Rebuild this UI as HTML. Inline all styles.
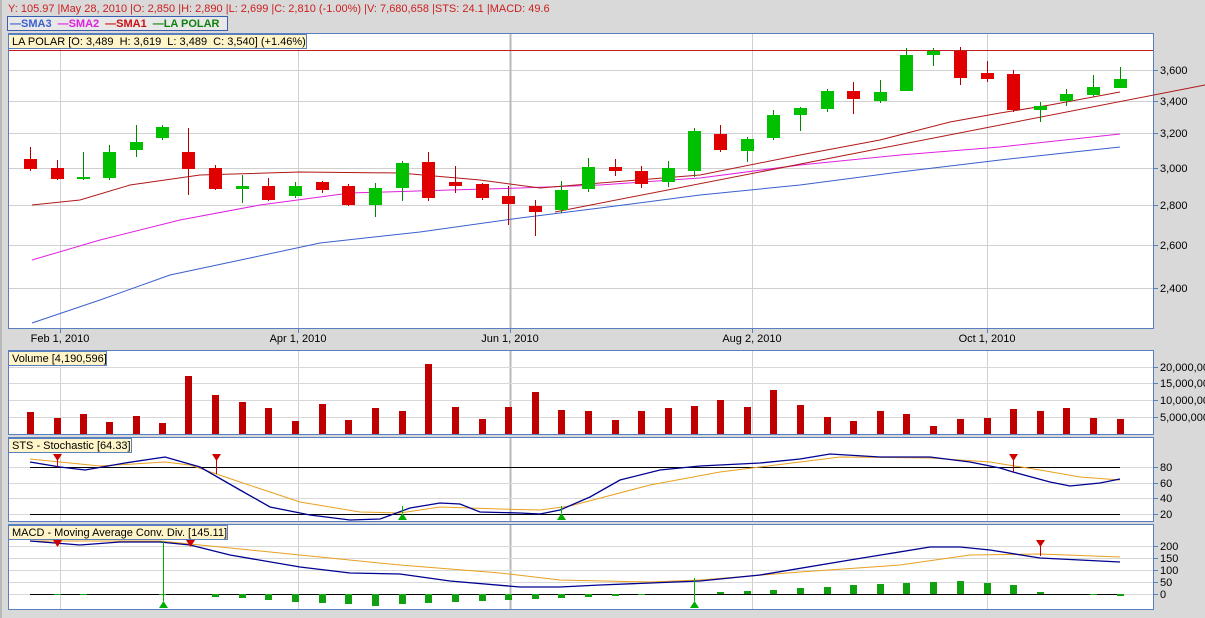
<!DOCTYPE html>
<html><head><meta charset="utf-8"><style>
body{margin:0;background:#d9d9d9;width:1205px;height:618px;overflow:hidden;font-family:"Liberation Sans",Arial,sans-serif}
svg{display:block}
text{font-family:"Liberation Sans",Arial,sans-serif;font-size:11px}
</style></head><body>
<svg id="s" width="1205" height="618" xmlns="http://www.w3.org/2000/svg">
<rect x="0" y="0" width="1205" height="618" fill="#d9d9d9"/>
<line x1="1" y1="0" x2="1" y2="618" stroke="#999"/>
<text x="8" y="12" fill="#cc2020">Y: 105.97 |May 28, 2010 |O: 2,850 |H: 2,890 |L: 2,699 |C: 2,810 (-1.00%) |V: 7,680,658 |STS: 24.1 |MACD: 49.6</text>
<rect x="7.5" y="16.5" width="220" height="14" fill="#e8e8e8" stroke="#3a5fb0"/>
<text x="10" y="27" font-weight="bold"><tspan fill="#3a5fd0">—SMA3</tspan><tspan fill="#e020e0" dx="6">—SMA2</tspan><tspan fill="#cc1010" dx="6">—SMA1</tspan><tspan fill="#108010" dx="6">—LA POLAR</tspan></text>
<rect x="8.5" y="33.5" width="1145" height="295" fill="#fff" stroke="#5a7fc0"/>
<rect x="8.5" y="350.5" width="1145" height="84" fill="#fff" stroke="#5a7fc0"/>
<rect x="8.5" y="437.5" width="1145" height="84" fill="#fff" stroke="#5a7fc0"/>
<rect x="8.5" y="524.5" width="1145" height="85" fill="#fff" stroke="#5a7fc0"/>
<g id="g"></g>
</svg>
<script>
var g=document.getElementById('g'),h='';
function L(x1,y1,x2,y2,c,w){h+='<line x1="'+x1+'" y1="'+y1+'" x2="'+x2+'" y2="'+y2+'" stroke="'+c+'" stroke-width="'+(w||1)+'"/>';}
function P(pts,c,w){h+='<polyline fill="none" stroke="'+c+'" stroke-width="'+(w||1)+'" points="'+pts+'"/>';}
function T(x,y,t,a,c){h+='<text x="'+x+'" y="'+y+'" fill="'+(c||'#000')+'"'+(a?' text-anchor="'+a+'"':'')+'>'+t+'</text>';}
[[70,'3,600'],[101,'3,400'],[133,'3,200'],[168,'3,000'],[205,'2,800'],[245,'2,600'],[288,'2,400']].forEach(function(r){L(9,r[0]+.5,1153,r[0]+.5,'#d0d0d0');L(1154,r[0]+.5,1158,r[0]+.5,'#5a7fc0');T(1160,r[0]+4,r[1]);});
[[60,'Feb 1, 2010'],[298,'Apr 1, 2010'],[521,'Jun 1, 2010'],[752,'Aug 2, 2010'],[987,'Oct 1, 2010']].forEach(function(r){
 var x=r[0];if(x==521)x=510;
 [[34,328],[351,434],[438,521],[525,609]].forEach(function(p){L(x+.5,p[0],x+.5,p[1],x==510?'#b8b8b8':'#d0d0d0',x==510?2:1);});
 L(x+.5,328,x+.5,333,'#5a7fc0');T(x,342,r[1],'middle');});
L(9,50.5,1153,50.5,'#c02020');
var C=[[30,'r',159,169,147,171],[57,'r',168,179,160,180],[83,'g',177,179,152,180],[109,'g',152,178,145,180],[136,'g',142,150,125,157],[162,'g',127,138,125,140],[188,'r',152,169,128,195],[215,'r',168,189,165,190],[242,'g',186,189,175,203],[268,'r',186,200,178,201],[295,'g',186,196,182,198],[322,'r',182,190,181,193],[348,'r',186,205,184,206],[375,'g',188,205,183,217],[402,'g',163,188,161,201],[428,'r',162,198,152,201],[455,'r',182,186,166,193],[482,'r',184,198,183,200],[508,'r',196,204,186,225],[535,'r',206,212,200,236],[561,'g',190,210,181,213],[588,'g',167,189,158,192],[615,'r',167,171,159,176],[641,'r',171,184,166,188],[668,'g',168,182,161,187],[694,'g',131,171,128,177],[720,'r',134,150,125,152],[747,'g',139,151,137,162],[773,'g',115,138,110,140],[800,'g',108,115,107,131],[827,'g',91,109,89,112],[853,'r',91,99,82,114],[880,'g',92,101,80,103],[906,'g',55,91,48,91],[933,'g',51,55,48,66],[960,'r',51,78,47,85],[987,'r',73,79,61,82],[1013,'r',74,110,70,112],[1040,'g',106,110,102,122],[1066,'g',94,101,89,106],[1093,'g',87,95,75,97],[1120,'g',79,88,67,88]];
P('32,323 100,300 170,275 250,258 320,243 420,232 520,218 600,208 700,195 800,185 900,172 1000,160 1120,147','#3a5fd0');
P('32,260 100,240 180,220 260,205 350,193 450,190 520,188 600,185 700,178 800,165 900,155 1000,147 1120,134','#e020e0');
P('32,205 80,200 130,185 200,175 300,172 400,173 480,180 540,188 600,183 700,175 800,155 880,140 950,122 1000,113 1050,105 1120,92','#b01818');
L(555,212,1205,85,'#b01818');
C.forEach(function(c){var col=c[1]=='r'?'#e00000':'#00c000',wc=c[1]=='r'?'#b00000':'#008800';
 L(c[0]+.5,c[4],c[0]+.5,c[5],wc);h+='<rect x="'+(c[0]-6)+'" y="'+c[2]+'" width="13" height="'+Math.max(2,c[3]-c[2])+'" fill="'+col+'"/>';});
h+='<rect x="8.5" y="34.5" width="298" height="14" fill="#fff5c8" stroke="#5a7fc0"/>';
T(12,45,'LA POLAR [O: 3,489&#160; H: 3,619&#160; L: 3,489&#160; C: 3,540] (+1.46%)');
[[367,'20,000,00'],[383,'15,000,00'],[400,'10,000,00'],[417,'5,000,000']].forEach(function(r){L(9,r[0]+.5,1153,r[0]+.5,'#d8d8d8');L(1154,r[0]+.5,1158,r[0]+.5,'#5a7fc0');T(1160,r[0]+4,r[1]);});
var V=[412,418,414,422,416,423,376,395,402,408,421,404,420,408,411,364,407,419,407,392,410,411,420,411,408,406,400,407,390,405,417,421,411,414,426,419,418,409,411,408,418,419];
C.forEach(function(c,i){h+='<rect x="'+(c[0]-3)+'" y="'+V[i]+'" width="7" height="'+(434-V[i])+'" fill="#c00000"/>';});
h+='<rect x="8.5" y="351.5" width="98" height="14" fill="#fff5c8" stroke="#5a7fc0"/>';T(12,362,'Volume [4,190,596]');
[[467,'80'],[483,'60'],[498,'40'],[514,'20']].forEach(function(r){L(9,r[0]+.5,1153,r[0]+.5,'#d8d8d8');L(1154,r[0]+.5,1158,r[0]+.5,'#5a7fc0');T(1160,r[0]+4,r[1]);});
L(30,467.5,1120,467.5,'#000');L(30,514.5,1120,514.5,'#000');
P('30,459 100,466 165,462 190,465 240,482 300,502 360,512 400,513 440,507 500,509 540,510 570,506 650,485 720,472 800,462 840,457 930,458 990,462 1040,470 1080,477 1120,480','#e8a020');
P('30,462 60,467 85,470 125,463 165,457 200,467 240,490 270,507 310,515 350,520 380,519 410,508 440,503 460,504 480,512 520,513 540,514 560,510 590,497 620,480 660,470 700,466 760,463 800,459 830,454 880,457 930,457 970,462 1000,468 1013,472 1050,482 1070,486 1100,483 1120,479','#000090',1.3);
function down(x,y1,y2){L(x+.5,y1,x+.5,y2,'#c00000');h+='<polygon points="'+(x-4)+','+y1+' '+(x+5)+','+y1+' '+(x+.5)+','+(y1+7)+'" fill="#d00000"/>';}
function up(x,y1,y2){L(x+.5,y1,x+.5,y2,'#00b000');h+='<polygon points="'+(x-4)+','+(y2+7)+' '+(x+5)+','+(y2+7)+' '+(x+.5)+','+y2+'" fill="#00b000"/>';}
down(57,454,467);down(216,454,474);down(1013,454,472);
up(402,506,513);up(561,506,513);
h+='<rect x="8.5" y="438.5" width="123" height="14" fill="#fff5c8" stroke="#5a7fc0"/>';T(12,449,'STS - Stochastic [64.33]');
[[546,'200'],[558,'150'],[570,'100'],[582,'50'],[594,'0']].forEach(function(r){L(9,r[0]+.5,1153,r[0]+.5,'#d8d8d8');L(1154,r[0]+.5,1158,r[0]+.5,'#5a7fc0');T(1160,r[0]+4,r[1]);});
L(30,594.5,1120,594.5,'#000');
var M=[0,-1,-1,0,0,-1,0,-3,-4,-6,-8,-9,-10,-12,-10,-9,-8,-7,-6,-5,-4,-3,-2,-1,0,0,2,3,4,6,7,9,10,11,12,13,11,9,2,0,-1,-2];
C.forEach(function(c,i){var m=M[i];if(!m)return;h+='<rect x="'+(c[0]-3)+'" y="'+(m>0?594-m:594)+'" width="7" height="'+Math.abs(m)+'" fill="#10a010"/>';});
P('30,541 160,541 200,545 300,555 400,565 500,573 560,580 650,582 700,580 800,572 900,565 970,555 1040,554 1120,557','#e8a020');
P('30,541 80,545 120,542 160,542 190,545 230,555 300,567 350,573 400,574 450,581 520,587 560,587 600,585 700,581 760,575 850,560 930,547 960,547 990,550 1040,558 1080,560 1120,562','#000090',1.3);
up(163,541,601);up(694,578,601);
down(57,540,546);down(190,540,546);down(1040,540,556);
h+='<rect x="8.5" y="525.5" width="219" height="14" fill="#fff5c8" stroke="#5a7fc0"/>';T(12,536,'MACD - Moving Average Conv. Div. [145.11]');
g.innerHTML=h;
</script>
</body></html>
